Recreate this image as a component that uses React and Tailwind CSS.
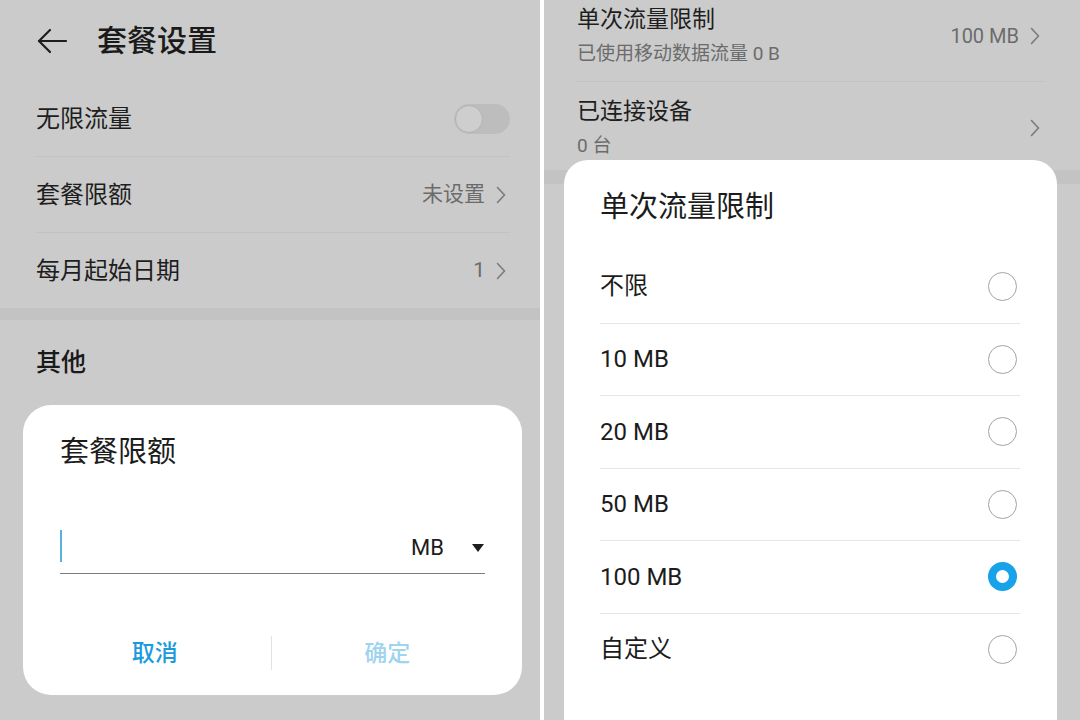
import React from 'react';

const FONT = { fontFamily: 'Roboto, "Noto Sans CJK SC", sans-serif' };

function Chevron({ className = '' }) {
  return (
    <svg width="10" height="18" viewBox="0 0 10 18" className={className}>
      <polyline points="1.5,1.5 8.5,9 1.5,16.5" fill="none" stroke="#7a7a7a" strokeWidth="1.6" strokeLinecap="round" strokeLinejoin="round" />
    </svg>
  );
}

function BackArrow() {
  return (
    <svg width="30" height="26" viewBox="0 0 30 26">
      <line x1="2" y1="13" x2="29" y2="13" stroke="#1e1e1e" strokeWidth="2.2" strokeLinecap="round" />
      <polyline points="13,2 2,13 13,24" fill="none" stroke="#1e1e1e" strokeWidth="2.2" strokeLinecap="round" strokeLinejoin="round" />
    </svg>
  );
}

function SettingRow({ label, value, toggle, last }) {
  return (
    <div className={`flex items-center justify-between ${last ? 'h-[75px]' : 'h-[76px] border-b border-[#c2c2c2]'}`}>
      <span className="text-[24px] text-[#1e1e1e]">{label}</span>
      {toggle ? (
        <div className="w-[56px] h-[30px] rounded-full bg-[#bdbdbd] flex items-center pl-px">
          <div className="w-[28px] h-[28px] rounded-full bg-[#cecece] border border-[#b3b3b3]" />
        </div>
      ) : (
        <div className="flex items-center gap-[11px] pr-[4px]">
          <span className="text-[21px] text-[#6b6b6b]">{value}</span>
          <Chevron />
        </div>
      )}
    </div>
  );
}

function LeftPanel() {
  return (
    <div className="relative w-[540px] h-full bg-[#cbcbcb] overflow-hidden">
      {/* Header */}
      <div className="h-[81px] flex items-center pl-[37px]">
        <BackArrow />
        <span className="ml-[30px] text-[30px] font-medium text-[#1a1a1a] leading-none">套餐设置</span>
      </div>

      <div className="pl-[36px] pr-[30px]">
        <SettingRow label="无限流量" toggle />
        <SettingRow label="套餐限额" value="未设置" />
        <SettingRow label="每月起始日期" value="1" last />
      </div>

      <div className="h-[12px] bg-[#c3c3c3]" />

      <div className="pl-[36px] pt-[26px] text-[25px] font-medium text-[#1a1a1a] leading-[34px]">其他</div>

      {/* Dialog */}
      <div className="absolute top-[405px] left-[23px] w-[499px] h-[290px] rounded-[28px] bg-white px-[37px] pt-[29px]">
        <div className="text-[29px] leading-[36px] text-[#1c1c1c]">套餐限额</div>
        <div className="mt-[60px] pb-[11px] border-b border-[#7d7d7d]">
          <div className="h-[32px] flex items-center">
            <div className="w-[2px] h-[32px] bg-[#58b3e0]" />
            <span className="ml-auto mt-[3px] text-[22px] text-[#1c1c1c] leading-none">MB</span>
            <svg width="12" height="10" viewBox="0 0 12 10" className="ml-[28px] mr-[1px] mt-[3px]">
              <polygon points="0,1 12,1 6,9" fill="#1e1e1e" />
            </svg>
          </div>
        </div>
        <div className="mt-[62px] h-[34px] flex items-center ml-[-21px] mr-[-18px]">
          <div className="flex-1 text-center text-[23px] font-medium text-[#1a9bdb] pt-[3px]">取消</div>
          <div className="w-px h-[34px] bg-[#e2e2e2]" />
          <div className="flex-1 text-center text-[23px] font-medium text-[#9fd3ef] pt-[3px]">确定</div>
        </div>
      </div>
    </div>
  );
}

function Radio({ checked }) {
  if (checked) {
    return <div className="w-[29px] h-[29px] rounded-full border-[8px] border-[#17a2ea] bg-white" />;
  }
  return <div className="w-[29px] h-[29px] rounded-full border-[1.5px] border-[#a3a3a3]" />;
}

const OPTIONS = ['不限', '10 MB', '20 MB', '50 MB', '100 MB', '自定义'];

function RightPanel() {
  return (
    <div className="relative flex-1 h-full bg-[#cbcbcb] overflow-hidden">
      <div className="pl-[33px] pr-[35px]">
        <div className="flex items-center justify-between pt-[5px] pb-[14px] border-b border-[#c2c2c2]">
          <div>
            <div className="text-[23px] leading-[30px] text-[#1e1e1e]">单次流量限制</div>
            <div className="mt-[6px] text-[19px] leading-[26px] text-[#6b6b6b]">已使用移动数据流量 0 B</div>
          </div>
          <div className="flex items-center gap-[11px] pr-[5px]">
            <span className="text-[20px] text-[#6b6b6b]">100 MB</span>
            <Chevron />
          </div>
        </div>
        <div className="flex items-center justify-between pt-[15px] pb-[11px]">
          <div>
            <div className="text-[23px] leading-[30px] text-[#1e1e1e]">已连接设备</div>
            <div className="mt-[6px] text-[19px] leading-[26px] text-[#6b6b6b]">0 台</div>
          </div>
          <Chevron className="mr-[5px]" />
        </div>
      </div>
      <div className="h-[14px] bg-[#c3c3c3]" />

      {/* Dialog */}
      <div className="absolute top-[160px] left-[20px] right-[23px] h-[600px] rounded-[24px] bg-white pl-[36px] pr-[37px] pt-[30px]">
        <div className="text-[29px] leading-[34px] text-[#1c1c1c]">单次流量限制</div>
        <div className="mt-[26px]">
          {OPTIONS.map((opt, i) => (
            <div
              key={opt}
              className={`h-[72.5px] flex items-center justify-between ${i > 0 ? 'border-t border-[#e6e6e6]' : ''}`}
            >
              <span className="text-[24px] text-[#1c1c1c]">{opt}</span>
              <div className="mr-[3px]">
                <Radio checked={opt === '100 MB'} />
              </div>
            </div>
          ))}
        </div>
      </div>
    </div>
  );
}

export default function App() {
  return (
    <div className="w-[1080px] h-[720px] flex bg-white overflow-hidden" style={FONT}>
      <LeftPanel />
      <div className="w-[4px]" />
      <RightPanel />
    </div>
  );
}
